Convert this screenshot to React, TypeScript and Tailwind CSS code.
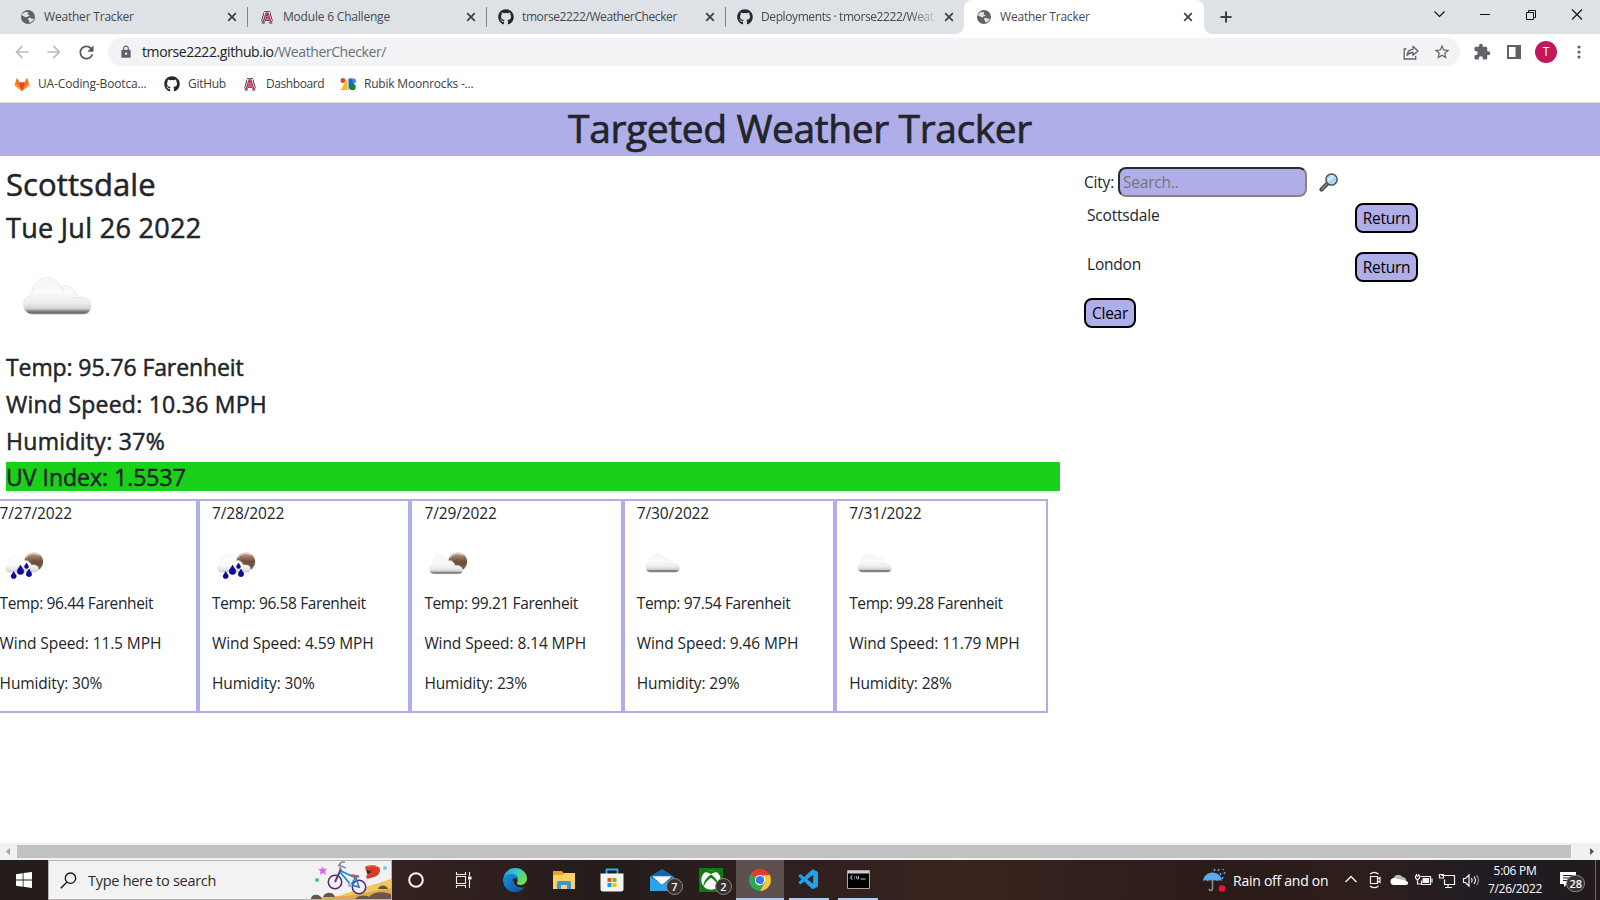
import React from "react";
import { FaGithub } from "react-icons/fa";
import { MdExtension, MdStarBorder, MdRefresh, MdArrowBack, MdArrowForward, MdLock } from "react-icons/md";
import { VscVscode } from "react-icons/vsc";

function Globe() {
  return (
    <svg width="16" height="16" viewBox="0 0 16 16" className="shrink-0">
      <circle cx="8" cy="8" r="7" fill="#5f6368" />
      <path d="M3 4.2C4.5 3 6.500 2.500 8 3.200c1 .5-.8 1.300-.4 2 .5.8 2 .3 1.900 1.400-.1 1-1.800.7-2.600 1.400-.9.7-1.400.3-2.200-.3C3.800 7 2.300 7 1.900 6.800 2 5.800 2.400 4.900 3 4.200zM8.500 9.200c1-.6 2.200-.3 3 .2.700.5 1.900.2 2.400.4-.6 2-2.200 3.500-4.200 4-.6-.5-.3-1.400-.8-2-.6-.8-1.300-1.900-.4-2.600z" fill="#dee1e6" />
    </svg>
  );
}

function BlockA() {
  return (
    <svg width="16" height="16" viewBox="0 0 16 16" className="shrink-0" fill="none">
      <path d="M4 12.500L6.500 4h3L12 12.500M5.500 9.800h5M2.800 12.500h3M10.200 12.500h3M5 3.800h6" stroke="#1b2f5c" strokeWidth="3.800" />
      <path d="M4 12.500L6.500 4h3L12 12.500M5.500 9.800h5M2.800 12.500h3M10.200 12.500h3M5 3.800h6" stroke="#f4eef2" strokeWidth="2.200" />
      <path d="M4.300 12.500L7 4h2l2.700 8.500M5.500 10h5M3 12.700h2.500M10.500 12.700H13" stroke="#d0304c" strokeWidth="1.300" />
    </svg>
  );
}

function Gitlab() {
  return (
    <svg width="16" height="16" viewBox="0 0 16 16" className="shrink-0">
      <path d="M8 15 0.500 9.300 3 1.500 5.400 6.500h5.200L13 1.500l2.500 7.800z" fill="#fc6d26" />
      <path d="M8 15 5.200 6.500h5.600z" fill="#e24329" />
      <path d="M8 15 0.500 9.300 1.500 6.500zM8 15l7.500-5.700-1-2.800z" fill="#fca326" />
    </svg>
  );
}

function Rubik() {
  return (
    <svg width="16" height="16" viewBox="0 0 16 16" className="shrink-0">
      <circle cx="3" cy="4.500" r="2.500" fill="#ea4335" />
      <path d="M7.500 3v11H0.500z" fill="#fbbc04" />
      <path d="M8.500 2.500h3.500a2.800 2.800 0 0 1 0 5.600l-3.500 6z" fill="#1967d2" />
      <path d="M11 2.500h2.500a2.500 2.500 0 0 1 0 5z" fill="#4285f4" />
      <circle cx="12.500" cy="11" r="3.200" fill="#188038" />
    </svg>
  );
}

function Cross() {
  return (
    <svg width="10" height="10" viewBox="0 0 10 10" className="shrink-0">
      <path d="M1.200 1.200l7.600 7.600M8.800 1.200L1.200 8.800" stroke="#3c4043" strokeWidth="1.700" />
    </svg>
  );
}

const TABS = [
  { icon: <Globe />, label: "Weather Tracker", fit: "tracking-[-0.200px]" },
  { icon: <BlockA />, label: "Module 6 Challenge", fit: "tracking-[-0.200px]" },
  { icon: <FaGithub size={16} color="#24292f" className="shrink-0" />, label: "tmorse2222/WeatherChecker", fit: "tracking-[-0.400px]" },
  { icon: <FaGithub size={16} color="#24292f" className="shrink-0" />, label: "Deployments · tmorse2222/Weat", fit: "tracking-[-0.400px] [mask-image:linear-gradient(to_right,black_86%,transparent_103%)]" },
];

function TabStrip() {
  return (
    <div className="flex h-[34px] bg-[#dee1e6] text-[12px] text-[#45494d]">
      <div className="flex w-[964px] items-center pl-[9px]">
        {TABS.map((t, i) => (
          <div key={t.label} className={i < 3 ? "flex h-5 w-[239px] items-center border-r border-[#80868b] pl-[11px] pr-[10px]" : "flex h-5 w-[238px] items-center pl-[11px] pr-[10px]"}>
            {t.icon}
            <span className={"ml-2 whitespace-nowrap " + t.fit}>{t.label}</span>
            <span className="ml-auto"><Cross /></span>
          </div>
        ))}
      </div>
      <div className="relative flex w-[240px] items-center rounded-t-lg bg-white pl-3 pr-[11px]">
        <div className="absolute -left-2 bottom-0 size-2 bg-[radial-gradient(circle_at_0_0,transparent_7.500px,white_8px)]" />
        <div className="absolute -right-2 bottom-0 size-2 bg-[radial-gradient(circle_at_100%_0,transparent_7.500px,white_8px)]" />
        <Globe />
        <span className="ml-2 flex-1 whitespace-nowrap tracking-[-0.2px]">Weather Tracker</span>
        <Cross />
      </div>
      <svg width="396" height="34" viewBox="0 0 396 34" fill="none" stroke="#111">
        <path d="M16.500 17h11M22 11.500v11" stroke="#3c4043" strokeWidth="2" />
        <path d="M230.500 11.500l5 5 5-5" strokeWidth="1.100" />
        <path d="M276 14.500h10" />
        <path d="M322.500 12.500h7v7h-7zM324.500 12v-1.500h7v7H330" />
        <path d="M368 9.500l10 10M378 9.500l-10 10" strokeWidth="1.100" />
      </svg>
    </div>
  );
}

function Toolbar() {
  return (
    <div className="flex h-9 items-center bg-white pb-0.5 pt-1">
      <div className="mt-[-2px] flex w-[108px] items-center gap-3 pl-3">
        <MdArrowBack size={20} color="#babcbe" />
        <MdArrowForward size={20} color="#babcbe" />
        <MdRefresh size={21} color="#55595e" />
      </div>
      <div className="mt-[-2px] flex h-7 w-[1352px] items-center rounded-full bg-[#f1f3f4] pl-[11px] pr-[9px]">
        <MdLock size={14} color="#5f6368" />
        <span className="ml-[9px] text-[14px] leading-5 tracking-[-0.410px] text-[#202124]">tmorse2222.github.io<span className="text-[#6b6f74]">/WeatherChecker/</span></span>
        <svg width="18" height="18" viewBox="0 0 18 18" fill="none" stroke="#5f6368" strokeWidth="1.300" className="ml-auto">
          <path d="M4.500 6H2.200v10h11.500v-3" />
          <path d="M5 12.500c.3-3.800 2.500-6 6-6.200V3.200L16 8l-5 4.300V9.500c-2.700 0-4.500.8-6 3z" strokeLinejoin="round" />
        </svg>
        <MdStarBorder size={18} color="#5f6368" className="ml-[13px]" />
      </div>
      <div className="mt-[-2px] flex flex-1 items-center pl-[13px]">
        <MdExtension size={18} color="#5f6368" />
        <svg width="14" height="14" viewBox="0 0 14 14" className="ml-4"><path d="M1 1h12v12H1z" fill="none" stroke="#5f6368" strokeWidth="2" /><path d="M8.500 1H13v12H8.500z" fill="#5f6368" /></svg>
        <div className="ml-[14px] flex size-[22px] items-center justify-center rounded-full bg-[#c2185b] text-[12px] text-white">T</div>
        <svg width="4" height="14" viewBox="0 0 4 14" className="ml-5" fill="#5f6368"><circle cx="2" cy="2" r="1.600" /><circle cx="2" cy="7" r="1.600" /><circle cx="2" cy="12" r="1.600" /></svg>
      </div>
    </div>
  );
}

function Bookmarks() {
  return (
    <div className="flex h-[33px] items-center border-b border-[#dadce0] bg-white pb-[5px] pl-[14px] text-[12px] text-[#3c4043]">
      <div className="flex w-[150px] items-center"><Gitlab /><span className="ml-2 whitespace-nowrap tracking-[-0.150px]">UA-Coding-Bootca...</span></div>
      <div className="flex w-[78px] items-center"><FaGithub size={16} color="#24292f" /><span className="ml-2 whitespace-nowrap tracking-[-0.300px]">GitHub</span></div>
      <div className="flex w-[98px] items-center"><BlockA /><span className="ml-2 whitespace-nowrap tracking-[-0.420px]">Dashboard</span></div>
      <div className="flex items-center"><Rubik /><span className="ml-2 whitespace-nowrap tracking-[-0.200px]">Rubik Moonrocks -...</span></div>
    </div>
  );
}

function Gradients() {
  return (
    <svg width="0" height="0" className="absolute">
      <defs>
        <linearGradient id="cloud" x1="0" y1="0" x2="0" y2="1">
          <stop offset="0" stopColor="#f6f6f6" />
          <stop offset="0.400" stopColor="#fafafa" />
          <stop offset="0.700" stopColor="#ececec" />
          <stop offset="0.850" stopColor="#cfcfcf" />
          <stop offset="0.900" stopColor="#8a8a8a" />
          <stop offset="0.950" stopColor="#6c6c6c" />
          <stop offset="1" stopColor="#9a9a9a" />
        </linearGradient>
        <linearGradient id="wet" x1="0" y1="0" x2="0" y2="1">
          <stop offset="0" stopColor="#ffffff" />
          <stop offset="0.600" stopColor="#f8f8f8" />
          <stop offset="1" stopColor="#cfcfcf" />
        </linearGradient>
        <linearGradient id="moon" x1="0" y1="0" x2="0" y2="1">
          <stop offset="0" stopColor="#d9c3b4" />
          <stop offset="0.250" stopColor="#9a7760" />
          <stop offset="0.500" stopColor="#6e4f3c" />
          <stop offset="1" stopColor="#7d5f4c" />
        </linearGradient>
      </defs>
    </svg>
  );
}

function Cloud({ size }: { size: number }) {
  return (
    <svg width={size} height={size} viewBox="0 0 100 100" className="block">
      <path d="M27 62.500C21 62.500 17.500 58 17.500 52.500c0-5 3-8.500 8-9.500C26 33 32 25.500 41 25.500c6 0 10.500 3.500 13.500 9.500 7-4 15 1 16.500 10.500 8-1.500 14 1.500 14 8.500 0 5-3.500 8.500-8 8.500z" fill="url(#cloud)" stroke="#e4e4e4" strokeWidth="0.700" />
      <path d="M53 34.500c2 .8 4 2.500 5 4.500M70 45.500c-1.500 0-3 .3-4.500 1" fill="none" stroke="#e2e2e2" strokeWidth="0.900" />
    </svg>
  );
}

function Night({ rain }: { rain?: boolean }) {
  return (
    <svg width="50" height="50" viewBox="0 0 50 50" className="block">
      <circle cx="33.700" cy="20.700" r="9.500" fill="url(#moon)" />
      <path d="M26 17a8.500 8.500 0 0 1 13-3" stroke="#f3e9e2" strokeWidth="0.900" fill="none" />
      {rain ? (
        <>
          <path d="M10 31.500c-3 0-4.500-2-4.500-4.300 0-2.200 1.300-3.800 3.500-4.200C9.200 18 12 14.500 16 14.500c3.500 0 6 2.500 7 5.500 3-1.500 7 0 8 4 4-.5 7.500.5 7.500 3.800 0 2.200-1.500 3.700-3.500 3.700z" fill="url(#wet)" stroke="#e6e6e6" strokeWidth="0.500" />
          <g fill="#0a0aa8" stroke="#00005c" strokeWidth="0.500">
            <path d="M20.500 24c.8 2.500 3.300 4 3.300 6.200a3.300 3.300 0 0 1-6.600 0c0-2.200 2.500-3.700 3.300-6.200z" />
            <path d="M13.700 30.500c.7 2 2.600 3 2.600 4.500a2.600 2.600 0 0 1-5.200 0c0-1.500 1.900-2.500 2.600-4.500z" />
            <path d="M29 28c.7 2 2.700 3.200 2.700 5a2.700 2.700 0 0 1-5.400 0c0-1.800 2-3 2.700-5z" />
            <path d="M26.500 22c.5 1.500 2 2.300 2 3.600a2 2 0 0 1-4 0c0-1.300 1.500-2.100 2-3.600z" />
          </g>
        </>
      ) : (
        <path d="M10 33c-3 0-4.500-2-4.500-4.800 0-2.700 1.300-4.300 3.500-4.700C9.200 18 12 14.500 16 14.500c3.500 0 6 2.500 7 5.500 3-1.500 7 0 8 4.500 4-.5 7.500 1 7.500 4.500 0 2.500-1.500 4-3.500 4z" fill="url(#cloud)" stroke="#e2e2e2" strokeWidth="0.500" />
      )}
    </svg>
  );
}

const DAYS = [
  { date: "7/27/2022", icon: <Night rain />, temp: "96.44", wind: "11.5", hum: 30 },
  { date: "7/28/2022", icon: <Night rain />, temp: "96.58", wind: "4.59", hum: 30 },
  { date: "7/29/2022", icon: <Night />, temp: "99.21", wind: "8.14", hum: 23 },
  { date: "7/30/2022", icon: <Cloud size={50} />, temp: "97.54", wind: "9.46", hum: 29 },
  { date: "7/31/2022", icon: <Cloud size={50} />, temp: "99.28", wind: "11.79", hum: 28 },
];

function Forecast() {
  return (
    <div className="mt-2 -ml-[14.400px] flex w-[1062.500px]">
      {DAYS.map((d) => (
        <div key={d.date} className="flex h-[214px] w-[212.400px] shrink-0 flex-col gap-4 whitespace-nowrap border-2 border-[#b0aee8] px-3 text-[15.500px] leading-6">
          <p className="tracking-[-0.120px]">{d.date}</p>
          <div>
            {d.icon}
            <p className="tracking-[-0.380px]">Temp: {d.temp} Farenheit</p>
          </div>
          <p className="tracking-[-0.100px]">Wind Speed: {d.wind} MPH</p>
          <p className="tracking-[-0.150px]">Humidity: {d.hum}%</p>
        </div>
      ))}
    </div>
  );
}

const BTN = "h-[30px] rounded-lg border-2 border-black bg-[#b0aee8] pt-[2px] text-[15.500px] leading-none tracking-[-0.250px] text-black";

function SearchPanel() {
  return (
    <section className="w-[516px] pt-[11px] text-[15.500px] leading-6 tracking-[-0.200px]">
      <div className="flex h-[30px] items-center">
        <label className="w-[34px] whitespace-nowrap">City:</label>
        <input placeholder="Search.." className="h-[30px] w-[189px] rounded-lg border-2 border-b-[#858585] border-l-[#2c2c2c] border-r-[#858585] border-t-[#2c2c2c] bg-[#b0aee8] px-[3px] placeholder:text-[#757575]" />
        <svg width="20" height="20" viewBox="0 0 20 20" className="ml-3">
          <path d="M2.500 17.500l6-6" stroke="#3c4146" strokeWidth="4" strokeLinecap="round" />
          <path d="M2.700 17.200l5-5" stroke="#8a9299" strokeWidth="1.600" strokeLinecap="round" />
          <circle cx="12.500" cy="7.500" r="5.600" fill="#a8d8f5" stroke="#4f565c" strokeWidth="1.500" />
          <path d="M9 8.500l5-4.500" stroke="#dff2fd" strokeWidth="1.800" />
        </svg>
      </div>
      <div className="flex h-[55px] pt-1.5">
        <span className="w-[271px] pl-[3px]">Scottsdale</span>
        <button className={BTN + " w-[63px]"}>Return</button>
      </div>
      <div className="flex h-[46px]">
        <span className="w-[271px] pl-[3px]">London</span>
        <button className={BTN + " w-[63px]"}>Return</button>
      </div>
      <button className={BTN + " w-[52px]"}>Clear</button>
    </section>
  );
}

function Bicycle() {
  return (
    <svg width="80" height="38" viewBox="0 0 80 38">
      <path d="M30 34L80 18v20H20z" fill="#f0c860" />
      <path d="M0 38c10-3 30-2 44-4l36-7v11z" fill="#dda850" />
      <path d="M0 38c0-5 9-6 11 0zM12 36c2-6 11-5 12 0zM44 38c3-4 11-5 16-1l1 1zM58 36c4-5 12-6 22-3v5H58zM67 28c2-5 9-4 10 0z" fill="#6e5349" />
      <circle cx="24" cy="21" r="6.700" fill="#f7edfb" stroke="#4e2c6e" strokeWidth="1.500" />
      <circle cx="48" cy="26" r="6.700" fill="#f7edfb" stroke="#4e2c6e" strokeWidth="1.500" />
      <path d="M30 8l-6 13" stroke="#54416e" strokeWidth="2" />
      <path d="M29 11l11 13 8 2-3-9-15-7M45 16l-5 8" stroke="#1d7fd1" strokeWidth="1.600" fill="none" />
      <path d="M29 8V2.500c1-1.500 4-2 5-1M27 4l8 3" stroke="#8e79b5" strokeWidth="1.500" fill="none" />
      <path d="M41 14.500l6 1" stroke="#a56262" strokeWidth="2.600" strokeLinecap="round" />
      <circle cx="39" cy="24" r="2.200" fill="#a9b4c2" />
      <path d="M54 6c3-2.500 12-2.500 14.500 1 1.500 4-1 8-5.500 9l-7 2-1-3 5-3-5-3z" fill="#d93a26" />
      <path d="M55 8.500l6 2.500-4.500 3z" fill="#4a2530" />
      <path d="M57 6c3-1.500 7-1.500 9 0" stroke="#f0705c" strokeWidth="1.200" fill="none" />
      <path d="M11 5l1.500 3 3.500-.5-2 2.700L15 14l-3-2-3 1.500.5-3.500L7 8l3.500 0z" fill="#d868f0" />
      <circle cx="6" cy="19" r="2" fill="#3fc878" />
      <circle cx="74" cy="7" r="2" fill="#69cfe8" />
    </svg>
  );
}

function Edge() {
  return (
    <svg width="24" height="24" viewBox="0 0 24 24">
      <defs>
        <linearGradient id="edgeTop" x1="0" y1="0" x2="1" y2="0.500"><stop offset="0" stopColor="#1e9fe0" /><stop offset="0.500" stopColor="#36c5d0" /><stop offset="1" stopColor="#6fe04b" /></linearGradient>
        <linearGradient id="edgeLow" x1="0" y1="0" x2="1" y2="1"><stop offset="0" stopColor="#1793dd" /><stop offset="1" stopColor="#0c4f9e" /></linearGradient>
      </defs>
      <path d="M0.300 11C1 4.500 6 0 12 0c7 0 12 5 12 10.500 0 4-3 6.500-6.500 6.500-3 0-4-1.200-3.500-2.300 1.500-2.200.5-6.200-4-6.200C5 8.500 1.500 11 .3 14z" fill="url(#edgeTop)" />
      <path d="M0.200 12C1 7.500 5 5.800 8.500 5.800c4.500 0 7 3 6.500 6.200-1-2.500-5-2.500-6 .5-1.300 4.500 3 9.500 8.500 8.500 2-.4 3-1.200 4.500-2C20 22 16 24 12 24 5 24-.3 18.500.2 12z" fill="url(#edgeLow)" />
      <path d="M9 12.500C7 18 12 22 18 21c2-.4 3-1.200 4.300-2-4.300 2-12.300 0-11.300-7z" fill="#1a68b8" />
    </svg>
  );
}

function Badge({ children }: { children: React.ReactNode }) {
  return <span className="absolute -bottom-[3px] -right-[9px] flex h-[17px] min-w-[17px] items-center justify-center rounded-full border border-[#8f8b8a] bg-[#37312f] px-[2px] text-[11px] font-semibold leading-none text-white">{children}</span>;
}

function Taskbar() {
  return (
    <footer className="flex h-10 bg-[linear-gradient(90deg,#231c1b_0%,#34211f_25%,#241c1b_38%,#2e201e_50%,#3a231e_60%,#2b1c1a_75%,#2d1e1c_86%,#1f1c26_94%,#221a1b_100%)] text-white">
      <div className="flex w-12 items-center justify-center">
        <svg width="16" height="16" viewBox="0 0 16 16" fill="white"><path d="M0 2.200L6.700 1.200v6.400H0zM7.500 1.100L16 0v7.600H7.500zM0 8.400h6.700v6.400L0 13.800zM7.500 8.400H16V16l-8.500-1.200z" /></svg>
      </div>
      <div className="flex w-[344px] items-center border border-[#b4b2b2] bg-[#f2f2f2] pl-[11px]">
        <svg width="17" height="17" viewBox="0 0 17 17" fill="none" stroke="#111" strokeWidth="1.300"><circle cx="10.500" cy="6.200" r="5.200" /><path d="M7 10L0.800 16.200" /></svg>
        <span className="ml-[11px] whitespace-nowrap pt-px text-[14.500px] tracking-[-0.280px] text-[#2b2b2b]">Type here to search</span>
        <span className="ml-auto"><Bicycle /></span>
      </div>
      <div className="flex w-12 items-center justify-center"><svg width="16" height="16" viewBox="0 0 16 16"><circle cx="8" cy="8" r="6.800" fill="none" stroke="#f4f4f4" strokeWidth="2" /></svg></div>
      <div className="flex w-12 items-center justify-center pr-px">
        <svg width="17" height="16" viewBox="0 0 17 16" fill="none" stroke="#f0f0f0"><path d="M1.500 4.500h9v7h-9zM1.500 0v2.500h9V0M1.500 16v-2.500h9V16M14.500 0v4M14.500 8v8" strokeWidth="1.100" /><path d="M13 4.500h3.500v3H13z" fill="white" stroke="none" /></svg>
      </div>
      <div className="flex w-[54px] items-center justify-center"><Edge /></div>
      <div className="flex w-11 items-center justify-center">
        <svg width="22" height="18" viewBox="0 0 22 18"><path d="M0 0h9l1.500 2H22v16H0z" fill="#e8a317" /><path d="M0 4h10l1.500-2H22v16H0z" fill="#fcd165" /><path d="M4 18v-6.500A1.500 1.500 0 0 1 5.500 10h11a1.500 1.500 0 0 1 1.500 1.500V18h-4v-4H8v4z" fill="#3a96dd" /></svg>
      </div>
      <div className="flex w-[52px] items-center justify-center">
        <svg width="24" height="24" viewBox="0 0 24 24"><path d="M6.500 6V1.500h11V6" fill="none" stroke="#2bb0ec" strokeWidth="1.800" /><path d="M0.500 5.500h23V21a2.500 2.500 0 0 1-2.500 2.500H3A2.500 2.500 0 0 1 .5 21z" fill="#f3f3f3" /><path d="M7.500 10h4v4h-4z" fill="#f25022" /><path d="M12.500 10h4v4h-4z" fill="#7fba00" /><path d="M7.500 15h4v4h-4z" fill="#00a4ef" /><path d="M12.500 15h4v4h-4z" fill="#ffb900" /></svg>
      </div>
      <div className="flex w-12 items-center justify-center">
        <div className="relative">
          <svg width="24" height="24" viewBox="0 0 24 24"><path d="M0 8.500L12 1l12 7.500V12H0z" fill="#1267b4" /><path d="M2.500 8.500h19l-9.500 9z" fill="#f0f4f8" /><path d="M0 8.500l12 8 12-8V23H0z" fill="#2aa4ea" /><path d="M2.500 8.500h19L12 15z" fill="#f4f6f8" /></svg>
          <Badge>7</Badge>
        </div>
      </div>
      <div className="flex w-[50px] items-center justify-center">
        <div className="relative">
          <svg width="24" height="24" viewBox="0 0 24 24"><path d="M0 0h24v24H0z" fill="#107c10" /><circle cx="12" cy="12" r="9.800" fill="white" /><path d="M5.500 4.500C8 3.500 10.500 5 12 6.300 13.500 5 16 3.500 18.500 4.500 16 1.500 8 1.500 5.500 4.500zM9.300 8.500C5.500 12 4 16 4.500 19 6 14.500 9.500 11.500 12 9.800c2.500 1.700 6 4.700 7.500 9.200.5-3-1-7-4.800-10.500L12 6.500z" fill="#107c10" /></svg>
          <Badge>2</Badge>
        </div>
      </div>
      <div className="flex w-12 items-center justify-center border-b-2 border-[#aecbf5] bg-[#5d504e] pt-0.5">
        <svg width="22" height="22" viewBox="0 0 22 22"><path d="M11 11L1.500 5.500A11 11 0 0 1 20.500 5.500z" fill="#e33b2e" /><path d="M1.500 5.500A11 11 0 0 0 11 22l4.500-8.500L11 11z" fill="#2da94f" /><path d="M20.500 5.500A11 11 0 0 1 11 22l4.800-8.200L15 5.500z" fill="#fcc934" /><path d="M1.500 5.500L6.200 13.700 11 6h9.800L20.500 5.500A11 11 0 0 0 1.500 5.500z" fill="#e33b2e" /><path d="M1.500 5.500l4.800 8.300L9 14V9z" fill="#2da94f" /><circle cx="11" cy="11" r="5.200" fill="white" /><circle cx="11" cy="11" r="4.100" fill="#3b78e7" /></svg>
      </div>
      <div className="ml-[5px] flex w-10 items-center justify-center border-b-2 border-[#aecbf5] pt-0.5"><VscVscode size={24} color="#23a0ea" /></div>
      <div className="ml-[9px] flex w-10 items-center justify-center border-b-2 border-[#aecbf5]">
        <svg width="23" height="19" viewBox="0 0 23 19"><path d="M0.500 0.500h22v18h-22z" fill="#000" stroke="#a9a9a9" /><path d="M1 1h21v2.500H1z" fill="#c9cdd1" /><path d="M5.500 6H4v3h1.500M7.500 6.500v.8M7.500 8.500v.8M9 6l1.500 3.500M11.500 6v3M13.500 9h5" stroke="#ddd" strokeWidth="0.900" fill="none" /></svg>
      </div>
      <div className="ml-auto flex items-center">
        <svg width="24" height="24" viewBox="0 0 24 24">
          <path d="M1 13C1.500 8 5.500 4.500 10.500 4.500S19.500 8 20 13c-1.500-1-3-1-4.500 0-1.500-1-3.500-1-5 0-1.500-1-3.500-1-5 0-1.500-1-3-1-4.500 0z" fill="#5aa9ec" />
          <path d="M10.500 12v9c0 2-3.500 2-3.500 0" fill="none" stroke="#8f8f8f" strokeWidth="1.500" />
          <path d="M12 3l1-2M16 3l1-2M18 7l1-2M22 6l1-2M20 11l1-2M21 2l.5-1" stroke="#5cb4f2" strokeWidth="1.500" />
          <circle cx="20" cy="20.500" r="3.300" fill="#e3173e" />
        </svg>
        <span className="ml-[7px] w-[94px] whitespace-nowrap text-[14px] tracking-[-0.260px]">Rain off and on</span>
      </div>
      <svg width="156" height="40" viewBox="0 0 156 40" fill="none" stroke="#f2f2f2" strokeWidth="1.200">
        <path d="M18.500 22l5.500-5.500 5.500 5.500" strokeWidth="1.400" />
        <path d="M43.500 16.500h7v7h-7zM50.500 19l2.500-1.500v5L50.500 21M43 14c2.500-2 6-2 8.500 0M43 26c2.500 2 6 2 8.500 0" />
        <path d="M67 25a3.500 3.500 0 0 1 0-7c1-4 7-4 8.500-.5 3 0 3.500 2 3.500 3.500 3 0 2.500 4 0 4z" fill="#fff" stroke="none" />
        <path d="M67 18c1-4 7-4 8.500-.5 3 0 3.500 1.500 3.500 3z" fill="#b9b9b9" stroke="none" />
        <path d="M93.500 16.500h10v8h-9v-4M88.500 16h4v2l-2 2-2-2zM89.500 16v-2M91.700 16v-2M90.500 20v4h3" /><path d="M95.500 18h6.500v5h-6.500z" fill="#f2f2f2" stroke="none" /><path d="M105 18.500v4" />
        <path d="M114.500 15.500h13v9h-10v-5M112.500 14.500h4v3.500h-4zM121 24.500v3M118 27.500h7" />
        <path d="M136.500 18.500h2l3.500-3.500v11l-3.500-3.500h-2zM144.500 18c1 1.500 1 3 0 4.500M147 16.500c2 2.500 2 5 0 7.500" /><path d="M149.500 15c2.500 3 2.500 7 0 10.500" stroke="#8a8a8a" />
      </svg>
      <div className="flex w-[64px] flex-col items-center justify-center text-[12px] leading-[18px] tracking-[-0.300px]"><span>5:06 PM</span><span>7/26/2022</span></div>
      <div className="flex w-[53px] justify-between">
        <div className="relative ml-[13px] mt-3 h-[17px] w-4">
          <svg width="16" height="15" viewBox="0 0 16 15"><path d="M0 0h16v12H7l-3 3v-3H0z" fill="white" /><path d="M3 3.500h10M3 6h10M3 8.500h7" stroke="#241b1c" /></svg>
          <Badge>28</Badge>
        </div>
        <div className="mr-[4px] w-px bg-[#6d6767]" />
      </div>
    </footer>
  );
}

export default function App() {
  return (
    <div className="flex h-[900px] w-[1600px] flex-col overflow-hidden bg-white font-['Open_Sans','Noto_Sans',sans-serif] text-[#212529]">
      <Gradients />
      <TabStrip />
      <Toolbar />
      <Bookmarks />
      <header className="flex h-[53px] justify-center bg-[#b0aee8]">
        <h1 className="text-[39px] leading-[50px] tracking-[-0.400px] [-webkit-text-stroke:0.700px_#212529]">Targeted Weather Tracker</h1>
      </header>
      <main className="flex h-[687px] overflow-hidden">
        <section className="w-[1084px] pt-2">
          <div className="ml-1.5 w-[1054px] [-webkit-text-stroke:0.500px_#212529]">
            <h2 className="mb-2 pt-[2px] text-[31px] leading-[36.400px] tracking-[0.100px]">Scottsdale</h2>
            <h3 className="mb-2 pt-[2px] text-[27px] leading-[31.600px] tracking-[0.300px]">Tue Jul 26 2022</h3>
            <Cloud size={100} />
            <h4 className="mb-2 pt-[2px] text-[23px] leading-[26.800px] tracking-[-0.100px]">Temp: 95.76 Farenheit</h4>
            <h4 className="mb-2 pt-[2px] text-[23px] leading-[26.800px] tracking-[0.240px]">Wind Speed: 10.36 MPH</h4>
            <h4 className="mb-2 pt-[2px] text-[23px] leading-[26.800px] tracking-[0.300px]">Humidity: 37%</h4>
            <h4 className="bg-[#1ad11a] pt-[2px] text-[23px] leading-[26.800px]">UV Index: 1.5537</h4>
          </div>
          <Forecast />
        </section>
        <SearchPanel />
      </main>
      <div className="flex h-[17px] items-center justify-between bg-[#f1f1f1]">
        <svg width="17" height="17" viewBox="0 0 17 17"><path d="M10 5v7L6 8.500z" fill="#a3a3a3" /></svg>
        <div className="h-[13px] w-[1554px] bg-[#c1c1c1]" />
        <svg width="29" height="17" viewBox="0 0 29 17"><path d="M19 5v7l4-3.500z" fill="#505050" /></svg>
      </div>
      <Taskbar />
    </div>
  );
}
